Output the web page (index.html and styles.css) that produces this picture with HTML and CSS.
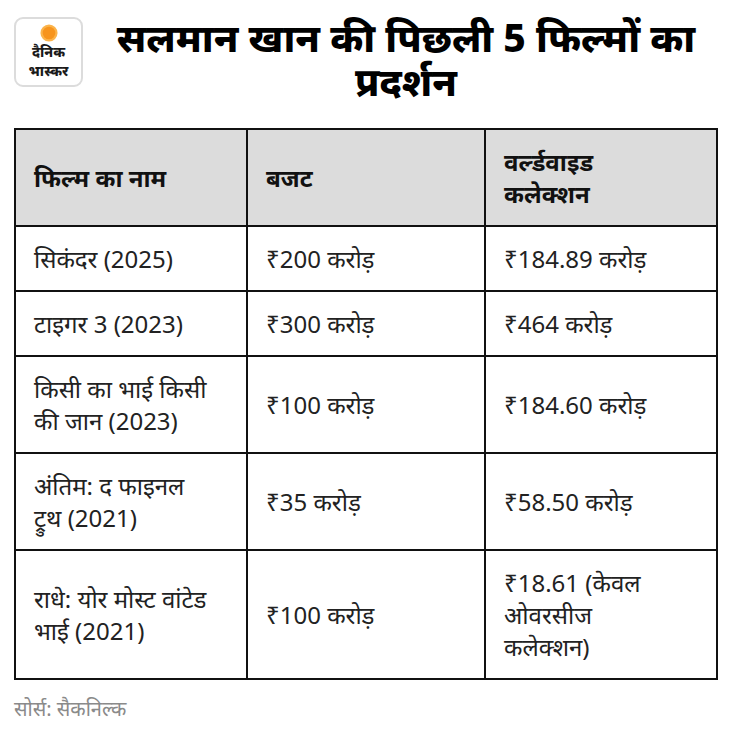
FILE: index.html
```html
<!DOCTYPE html>
<html lang="hi">
<head>
<meta charset="utf-8">
<link rel="stylesheet" href="styles.css">
</head>
<body>
<div class="page">
  <header class="head">
    <div class="logo">
      <svg class="sun" width="18" height="18" viewBox="0 0 20 20">
        <circle cx="10" cy="10" r="9.5" fill="#fbb34a"/>
        <circle cx="10" cy="10" r="7" fill="#f7941d"/>
      </svg>
      <div class="logo-text">
        <span class="logo-line">दैनिक</span>
        <span class="logo-line">भास्कर</span>
      </div>
    </div>
    <h1 class="title">सलमान खान की पिछली 5 फिल्मों का प्रदर्शन</h1>
  </header>
  <table class="data">
    <colgroup>
      <col class="c1"><col class="c2"><col class="c3">
    </colgroup>
    <thead>
      <tr><th>फिल्म का नाम</th><th>बजट</th><th>वर्ल्डवाइड<br>कलेक्शन</th></tr>
    </thead>
    <tbody>
      <tr><td>सिकंदर (2025)</td><td>₹200 करोड़</td><td>₹184.89 करोड़</td></tr>
      <tr><td>टाइगर 3 (2023)</td><td>₹300 करोड़</td><td>₹464 करोड़</td></tr>
      <tr><td>किसी का भाई किसी<br>की जान (2023)</td><td>₹100 करोड़</td><td>₹184.60 करोड़</td></tr>
      <tr><td>अंतिम: द फाइनल<br>ट्रुथ (2021)</td><td>₹35 करोड़</td><td>₹58.50 करोड़</td></tr>
      <tr><td>राधे: योर मोस्ट वांटेड<br>भाई (2021)</td><td>₹100 करोड़</td><td>₹18.61 (केवल<br>ओवरसीज<br>कलेक्शन)</td></tr>
    </tbody>
  </table>
  <p class="source">सोर्स: सैकनिल्क</p>
</div>
</body>
</html>
```
FILE: styles.css
```css
html, body {
  margin: 0;
  padding: 0;
  background: #fff;
}
body {
  font-family: "Noto Sans", "Noto Sans Devanagari", "Lohit Devanagari", sans-serif;
  color: #111;
}
.page {
  padding: 15px 14px 0 14px;
}
.head {
  display: flex;
  align-items: flex-start;
  gap: 13px;
}
.logo {
  flex: 0 0 auto;
  width: 65px;
  height: 66px;
  margin-top: 2px;
  border: 2px solid #dcdcdc;
  border-radius: 9px;
  display: flex;
  flex-direction: column;
  align-items: center;
}
.sun {
  margin-top: 5px;
  display: block;
}
.logo-text {
  display: flex;
  flex-direction: column;
  align-items: center;
}
.logo-line {
  font-weight: 800;
  font-size: 14px;
  line-height: 19px;
  color: #1a1a1a;
}
.title {
  flex: 1;
  margin: 0;
  text-align: center;
  font-size: 39px;
  line-height: 44px;
  font-weight: 800;
  color: #000;
}
.data {
  margin-top: 25px;
  width: 702px;
  table-layout: fixed;
  border-collapse: collapse;
  border: 2px solid #111;
}
.c1 { width: 232px; }
.c2 { width: 238px; }
.c3 { width: 232px; }
.data th, .data td {
  border: 2px solid #111;
  padding: 16px 10px 15px 18px;
  font-size: 24px;
  line-height: 32px;
  text-align: left;
  vertical-align: middle;
  color: #222;
}
.data th {
  background: #dcdcdc;
  font-weight: 700;
  color: #111;
}
.data td {
  font-weight: 400;
}
.source {
  margin: 14px 0 0 0;
  font-size: 20px;
  line-height: 30px;
  color: #8a8a8a;
}
```
